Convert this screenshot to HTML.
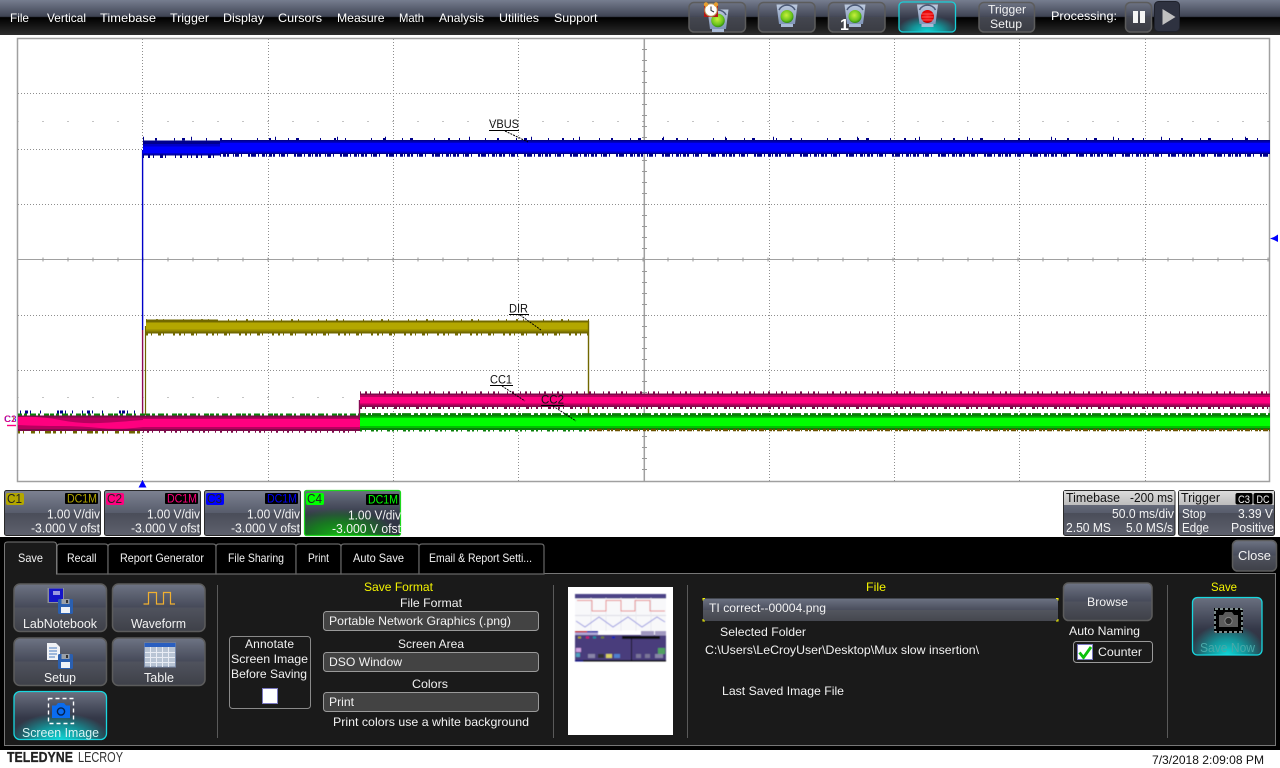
<!DOCTYPE html>
<html><head><meta charset="utf-8"><title>Teledyne LeCroy</title>
<style>
html,body{margin:0;padding:0;background:#fff;width:1280px;height:768px;overflow:hidden}
svg{display:block}
text{font-family:"Liberation Sans",Arial,sans-serif;font-size:12px;fill:#f2f2f2;white-space:pre}
.m{font-size:12px;fill:#fff}
.y{fill:#f4f400}
.k{fill:#000}
.c{font-size:13px;fill:#f4f4f4}
.l{font-size:12px;fill:#111}
</style></head><body>
<svg width="1280" height="768" viewBox="0 0 1280 768" xmlns="http://www.w3.org/2000/svg">
<defs>
<filter id="soft" x="-5%" y="-5%" width="110%" height="110%"><feGaussianBlur stdDeviation=".45"/></filter>
<linearGradient id="bar" x1="0" y1="0" x2="0" y2="1">
<stop offset="0" stop-color="#767d8f"/><stop offset=".47" stop-color="#3e4353"/><stop offset=".5" stop-color="#000"/><stop offset="1" stop-color="#2d2d2d"/></linearGradient>
<linearGradient id="btn" x1="0" y1="0" x2="0" y2="1">
<stop offset="0" stop-color="#6e7484"/><stop offset=".5" stop-color="#454958"/><stop offset=".5" stop-color="#50535e"/><stop offset="1" stop-color="#3e4048"/></linearGradient>
<linearGradient id="act" x1="0" y1="0" x2="0" y2="1">
<stop offset="0" stop-color="#6a7080"/><stop offset=".55" stop-color="#343848"/><stop offset="1" stop-color="#2e3240"/></linearGradient>
<radialGradient id="glow" cx=".5" cy="1" r=".55" fx=".5" fy="1">
<stop offset="0" stop-color="#10d8d8"/><stop offset=".5" stop-color="#0fa5a8" stop-opacity=".85"/><stop offset="1" stop-color="#0fa5a8" stop-opacity="0"/></radialGradient>
<radialGradient id="gglow" cx=".35" cy="1" r=".6" fx=".35" fy="1">
<stop offset="0" stop-color="#16b016"/><stop offset=".5" stop-color="#128a18" stop-opacity=".8"/><stop offset="1" stop-color="#128a18" stop-opacity="0"/></radialGradient>
<linearGradient id="desc" x1="0" y1="0" x2="0" y2="1">
<stop offset="0" stop-color="#7d8292"/><stop offset=".5" stop-color="#575c6b"/><stop offset=".5" stop-color="#4a4d59"/><stop offset="1" stop-color="#5e616d"/></linearGradient>
<linearGradient id="inp" x1="0" y1="0" x2="0" y2="1">
<stop offset="0" stop-color="#6c7282"/><stop offset=".5" stop-color="#4a4e5d"/><stop offset=".5" stop-color="#53565f"/><stop offset="1" stop-color="#45474f"/></linearGradient>
<linearGradient id="hdr" x1="0" y1="0" x2="0" y2="1"><stop offset="0" stop-color="#dcdcdc"/><stop offset="1" stop-color="#bcbcbc"/></linearGradient>
<radialGradient id="gball" cx=".45" cy=".4" r=".6"><stop offset="0" stop-color="#c8f03c"/><stop offset=".7" stop-color="#6cc41c"/><stop offset="1" stop-color="#2f8a10"/></radialGradient>
<radialGradient id="rball" cx=".5" cy=".45" r=".6"><stop offset="0" stop-color="#ff2020"/><stop offset=".75" stop-color="#e00000"/><stop offset="1" stop-color="#8a0000"/></radialGradient>
<linearGradient id="frame" x1="0" y1="0" x2="0" y2="1"><stop offset="0" stop-color="#bcc9de"/><stop offset="1" stop-color="#7f94b8"/></linearGradient>
<g id="light"><path d="M-10.5 -10.5H10.5L8 9H-8Z" fill="url(#frame)"/><path d="M-8 -5A9 9 0 0 1 8 -5" fill="none" stroke="#4c5a78" stroke-width="1.5"/><path d="M-6 9H6V12H-6Z" fill="#a9bad6"/></g>
<g id="floppy"><rect width="15" height="15" rx="1.5" fill="#2a5fb0"/><rect x="3" y="8" width="9" height="6" fill="#eef2f8"/><rect x="3.5" y="0" width="8" height="5" fill="#9aa0a8"/><rect x="8" y="1" width="2" height="3" fill="#333"/></g>
</defs>

<!-- plot -->
<rect width="1280" height="768" fill="#fff"/>
<g fill="none" stroke="#8e8e8e" stroke-width="1" stroke-dasharray="1 2">
<path d="M142.5 39V481M268.5 39V481M393.5 39V481M518.5 39V481M769.5 39V481M894.5 39V481M1019.5 39V481M1145.5 39V481"/>
<path d="M18 93.5H1269M18 149.5H1269M18 204.5H1269M18 315.5H1269M18 370.5H1269M18 425.5H1269"/>
</g>
<g fill="none" stroke="#8a8a8a" stroke-width="1" stroke-dasharray="1 24">
<path d="M17.5 121.5H1269M17.5 397.5H1269"/>
</g>
<g fill="none" stroke="#a0a0a0">
<path stroke-width="1.5" d="M644.3 38V481"/>
<path stroke-width="1" d="M18 259.5H1269"/>
<rect x="17.5" y="38.5" width="1252" height="443" stroke-width="1.5"/>
</g>
<g fill="none" stroke="#999" stroke-width="1">
<path d="M642 49.5h5M642 60.5h5M642 71.5h5M642 82.5h5M642 93.5h5M642 104.5h5M642 115.5h5M642 126.5h5M642 137.5h5M642 149.5h5M642 160.5h5M642 171.5h5M642 182.5h5M642 193.5h5M642 204.5h5M642 215.5h5M642 226.5h5M642 237.5h5M642 248.5h5M642 271.5h5M642 282.5h5M642 293.5h5M642 304.5h5M642 315.5h5M642 326.5h5M642 337.5h5M642 348.5h5M642 359.5h5M642 370.5h5M642 381.5h5M642 392.5h5M642 403.5h5M642 414.5h5M642 425.5h5M642 436.5h5M642 447.5h5M642 458.5h5M642 469.5h5"/>
<path stroke-width="4" stroke-dasharray="1 24" d="M42.5 259.5H1269"/>
</g>

<!-- blue C3 -->
<path d="M142.6 150V330" stroke="#0000c8" stroke-width="1.4" fill="none"/>
<path d="M142.6 330V414" stroke="#8a0a55" stroke-width="1.4" fill="none"/>
<path d="M145.5 326V415" stroke="#6f6500" stroke-width="1.2" fill="none"/>
<rect x="143" y="140.5" width="77" height="15" fill="#00008c"/>
<rect x="143" y="144" width="77" height="10.5" fill="#0000c8"/>
<rect x="143" y="146.5" width="77" height="6.5" fill="#0000ff"/>
<rect x="220" y="140" width="1050" height="14" fill="#00008c"/>
<rect x="220" y="141.5" width="1050" height="11.5" fill="#0000c4"/>
<rect x="220" y="143" width="1050" height="8.5" fill="#0000ff"/>
<g fill="none" stroke="#00008c">
<path stroke-width="4" stroke-dasharray="1 4 2 3 1 6 3 2 1 9 1 4 2 5 1 3" d="M143 156H220"/>
<path stroke-width="3.5" stroke-dasharray="1 2 3 1 2 4 1 1 4 2 1 6 2 1 5 2 1 3 3 1" d="M220 155H1270"/>
<path stroke-width="2.4" stroke-dasharray="1 11 2 17 1 7 3 21 1 13 2 9 1 25" d="M143 139.2H1270"/>
<path stroke-width="3.5" stroke-dasharray="1 47 1 83 1 61" d="M143 138.5H1270"/>
</g>

<!-- olive C1 -->
<rect x="146" y="319.5" width="72" height="14" fill="#716800"/>
<rect x="218" y="320.5" width="371" height="13" fill="#716800"/>
<rect x="146" y="322" width="443" height="9.5" fill="#958a00"/>
<rect x="146" y="323" width="443" height="6.5" fill="#b3a700"/>
<path d="M146 334.3H589" stroke="#716800" stroke-width="2.4" stroke-dasharray="2 3 1 6 3 2 1 9 2 4" fill="none"/>
<path d="M146 319.8H589" stroke="#716800" stroke-width="1.4" stroke-dasharray="1 9 2 5 1 19 1 7" fill="none"/>
<path d="M588.5 321V416" stroke="#716800" stroke-width="1.4" fill="none"/>

<!-- pre-step pink -->
<path d="M18 414.5H360" stroke="#0a820a" stroke-width="2" stroke-dasharray="4 2 3 3 6 2 2 4 5 1" fill="none"/>
<path d="M20 412H140" stroke="#00008c" stroke-width="3" stroke-dasharray="1 4 3 2 1 9 1 16 2 1 3 2 1 6 1 9" fill="none"/>
<path d="M18 432H140" stroke="#6f6500" stroke-width="3" stroke-dasharray="2 3 1 7 4 4 1 5 6 2 3 4" fill="none"/>
<path d="M143 431.5H360" stroke="#7d0a4a" stroke-width="2.4" stroke-dasharray="1 3 2 3 1 6 1 4 2 5" fill="none"/>
<rect x="18" y="415.5" width="342" height="15.5" fill="#7d0a4a"/>
<rect x="18" y="417.5" width="342" height="11.5" fill="#b8005f"/>
<rect x="143" y="419" width="217" height="8" fill="#ff007f"/>
<path d="M18 417Q40 416 60 420T100 423T143 420V427Q120 430 100 428T60 426T18 425Z" fill="#ff007f"/>
<path d="M359.5 400V420" stroke="#8a0a55" stroke-width="1.4" fill="none"/>

<!-- green C4 -->
<rect x="360" y="415" width="910" height="15" fill="#088008"/>
<rect x="360" y="416.5" width="910" height="11.5" fill="#00c000"/>
<rect x="360" y="418" width="910" height="8" fill="#00ff00"/>
<path d="M360 414.3H1270" stroke="#088008" stroke-width="2.4" stroke-dasharray="6 2 3 1 9 3 4 2" fill="none"/>
<path d="M360 430.5H589" stroke="#088008" stroke-width="2" stroke-dasharray="2 3 1 5 3 2" fill="none"/>
<path d="M589 430H1270" stroke="#6b5200" stroke-width="2.4" stroke-dasharray="3 1 2 2 5 1 1 3" fill="none"/>

<!-- pink C2 high -->
<rect x="360" y="393.5" width="910" height="13.5" fill="#7d0a4a"/>
<rect x="360" y="395" width="910" height="10.5" fill="#b8005f"/>
<rect x="360" y="397" width="910" height="6.5" fill="#ff007f"/>
<path d="M360 392.6H1270" stroke="#7d0a4a" stroke-width="2.4" stroke-dasharray="1 4 2 3 1 8 1 4 2 6" fill="none"/>
<path d="M360 407.8H1270" stroke="#7d0a4a" stroke-width="2.4" stroke-dasharray="2 3 1 6 3 2 1 4" fill="none"/>

<!-- labels -->
<text class="l" x="489" y="128" textLength="30" lengthAdjust="spacingAndGlyphs">VBUS</text>
<path d="M489 130.5H519" stroke="#000" fill="none"/><path d="M505 131L528 142" stroke="#000" stroke-dasharray="2 1" fill="none"/>
<text class="l" x="509" y="312.5" textLength="19" lengthAdjust="spacingAndGlyphs">DIR</text>
<path d="M509 314.5H529" stroke="#000" fill="none"/><path d="M520 315L541 330" stroke="#000" stroke-dasharray="2 1" fill="none"/>
<text class="l" x="490" y="383.5" textLength="22" lengthAdjust="spacingAndGlyphs">CC1</text>
<path d="M490 385.5H513" stroke="#000" fill="none"/><path d="M502 386L525 401" stroke="#000" stroke-dasharray="2 1" fill="none"/>
<text class="l" x="541" y="403.5" textLength="23" lengthAdjust="spacingAndGlyphs">CC2</text>
<path d="M541 405.5H564" stroke="#000" fill="none"/><path d="M553 406L576 421" stroke="#000" stroke-dasharray="2 1" fill="none"/>

<!-- markers -->
<text x="4" y="422" style="font-size:9px;fill:#b3a700" textLength="12">C1</text>
<text x="4.5" y="422" style="font-size:9px;fill:#0000ff" textLength="12">C3</text>
<text x="4" y="422" style="font-size:9px;fill:#ff007f" textLength="12">C2</text>
<path d="M7 425.5H16" stroke="#ff007f" stroke-width="1.4" fill="none"/>
<path d="M138.5 487.5L142.5 480L146.5 487.5Z" fill="#0000ff"/>
<path d="M1270 238.5L1274 237L1278 234.5V242L1274 240Z" fill="#0000ff"/>

<!-- top bar -->
<rect width="1280" height="35" fill="url(#bar)"/>
<text class="m" x="10" y="22" textLength="19" lengthAdjust="spacingAndGlyphs">File</text>
<text class="m" x="47" y="22" textLength="39" lengthAdjust="spacingAndGlyphs">Vertical</text>
<text class="m" x="100" y="22" textLength="56" lengthAdjust="spacingAndGlyphs">Timebase</text>
<text class="m" x="170" y="22" textLength="39" lengthAdjust="spacingAndGlyphs">Trigger</text>
<text class="m" x="223" y="22" textLength="41" lengthAdjust="spacingAndGlyphs">Display</text>
<text class="m" x="278" y="22" textLength="44" lengthAdjust="spacingAndGlyphs">Cursors</text>
<text class="m" x="337" y="22" textLength="47.5" lengthAdjust="spacingAndGlyphs">Measure</text>
<text class="m" x="399" y="22" textLength="25" lengthAdjust="spacingAndGlyphs">Math</text>
<text class="m" x="439" y="22" textLength="45" lengthAdjust="spacingAndGlyphs">Analysis</text>
<text class="m" x="499" y="22" textLength="40" lengthAdjust="spacingAndGlyphs">Utilities</text>
<text class="m" x="554" y="22" textLength="43.5" lengthAdjust="spacingAndGlyphs">Support</text>
<!-- toolbar buttons -->
<g stroke="#5c5c5c" stroke-width="1.5" fill="url(#btn)" fill-opacity=".85">
<rect x="689" y="2.5" width="56.5" height="29.5" rx="5"/>
<rect x="758.5" y="2.5" width="56.5" height="29.5" rx="5"/>
<rect x="828.5" y="2.5" width="56.5" height="29.5" rx="5"/>
<rect x="979" y="2.5" width="55.5" height="29.5" rx="5"/>
<rect x="1125.5" y="2.5" width="26" height="29.5" rx="5"/>
</g>
<rect x="1154.5" y="1.5" width="25" height="30" rx="4" fill="#2e3240" stroke="#1f222c"/>
<rect x="899" y="2" width="56.5" height="30" rx="4" fill="url(#act)"/>
<rect x="899" y="2" width="56.5" height="30" rx="4" fill="url(#glow)"/>
<rect x="899" y="2" width="56.5" height="30" rx="4" fill="none" stroke="#18d0d8" stroke-width="1.3"/>
<!-- b1 -->
<use href="#light" x="718" y="20"/><circle cx="718" cy="20.5" r="6.8" fill="url(#gball)"/>
<rect x="704" y="5" width="14" height="12" fill="#b51818"/>
<circle cx="711" cy="10" r="6.2" fill="#fff" stroke="#b89a5a" stroke-width="1"/>
<path d="M711 6.5V10.5L714 12" stroke="#333" fill="none"/>
<circle cx="706" cy="4.5" r="2.2" fill="#e8a030"/><circle cx="716" cy="4.5" r="2.2" fill="#e8a030"/>
<!-- b2 -->
<use href="#light" x="787" y="15"/><circle cx="787" cy="16.5" r="6.5" fill="url(#gball)"/>
<!-- b3 -->
<use href="#light" x="855" y="15"/><circle cx="855" cy="16.5" r="6.5" fill="url(#gball)"/>
<text x="840" y="30" style="font-size:16px;font-weight:bold;fill:#fff">1</text>
<!-- b4 -->
<use href="#light" x="927.5" y="15"/><circle cx="927.5" cy="16.5" r="6.5" fill="url(#rball)"/>
<path d="M921.5 14h12M921.5 17h12M922 20h11" stroke="#ff7070" stroke-width=".7" fill="none"/>
<text x="988" y="13.5" textLength="38" lengthAdjust="spacingAndGlyphs">Trigger</text>
<text x="990" y="28" textLength="32" lengthAdjust="spacingAndGlyphs">Setup</text>
<text class="m" x="1051" y="20" textLength="66" lengthAdjust="spacingAndGlyphs">Processing:</text>
<rect x="1133" y="11" width="5" height="12" fill="#f4f4f4"/><rect x="1140" y="11" width="5" height="12" fill="#f4f4f4"/>
<path d="M1162.5 9L1175.5 17L1162.5 25Z" fill="#c0c0c0"/>

<!-- descriptors -->
<g stroke="#2a2a2a" stroke-width="1" fill="url(#desc)">
<rect x="4.5" y="490.5" width="96" height="45" rx="2"/>
<rect x="104.5" y="490.5" width="96" height="45" rx="2"/>
<rect x="204.5" y="490.5" width="96" height="45" rx="2"/>
<rect x="1063.5" y="490.5" width="111.5" height="45" rx="2"/>
<rect x="1178.5" y="490.5" width="96" height="45" rx="2"/>
</g>
<rect x="304.5" y="490.5" width="96" height="45" rx="2" fill="url(#act)"/>
<rect x="304.5" y="490.5" width="96" height="45" rx="2" fill="url(#gglow)"/>
<rect x="304.5" y="490.5" width="96" height="45" rx="2" fill="none" stroke="#1ed81e" stroke-width="1.2"/>
<rect x="6" y="493" width="18" height="12" rx="2" fill="#b3a700"/>
<rect x="106" y="493" width="18" height="12" rx="2" fill="#ff007f"/>
<rect x="206" y="493" width="18" height="12" rx="2" fill="#0000ff"/>
<rect x="306" y="493" width="18" height="12" rx="2" fill="#00ff00"/>
<rect x="65" y="493" width="33" height="11" rx="1" fill="#000"/><rect x="165" y="493" width="33" height="11" rx="1" fill="#000"/><rect x="265" y="493" width="33" height="11" rx="1" fill="#000"/><rect x="366" y="494" width="33" height="11" rx="1" fill="#000"/>
<text x="7" y="503" textLength="15" lengthAdjust="spacingAndGlyphs" style="fill:#222;font-size:13px">C1</text>
<text x="107" y="503" textLength="15" lengthAdjust="spacingAndGlyphs" style="fill:#222;font-size:13px">C2</text>
<text x="207" y="503" textLength="15" lengthAdjust="spacingAndGlyphs" style="fill:#222;font-size:13px">C3</text>
<text x="307" y="503" textLength="15" lengthAdjust="spacingAndGlyphs" style="fill:#222;font-size:13px">C4</text>
<text x="67" y="502.5" textLength="30" lengthAdjust="spacingAndGlyphs" style="fill:#b3a700">DC1M</text>
<text x="167" y="502.5" textLength="30" lengthAdjust="spacingAndGlyphs" style="fill:#ff007f">DC1M</text>
<text x="267" y="502.5" textLength="30" lengthAdjust="spacingAndGlyphs" style="fill:#0000ff">DC1M</text>
<text x="368" y="503.5" textLength="30" lengthAdjust="spacingAndGlyphs" style="fill:#00ff00">DC1M</text>
<text class="c" x="47" y="518.5" textLength="53" lengthAdjust="spacingAndGlyphs">1.00 V/div</text>
<text class="c" x="147" y="518.5" textLength="53" lengthAdjust="spacingAndGlyphs">1.00 V/div</text>
<text class="c" x="247" y="518.5" textLength="53" lengthAdjust="spacingAndGlyphs">1.00 V/div</text>
<text class="c" x="348" y="519.5" textLength="53" lengthAdjust="spacingAndGlyphs">1.00 V/div</text>
<text class="c" x="31" y="532.5" textLength="69" lengthAdjust="spacingAndGlyphs">-3.000 V ofst</text>
<text class="c" x="131" y="532.5" textLength="69" lengthAdjust="spacingAndGlyphs">-3.000 V ofst</text>
<text class="c" x="231" y="532.5" textLength="69" lengthAdjust="spacingAndGlyphs">-3.000 V ofst</text>
<text class="c" x="332" y="533" textLength="69" lengthAdjust="spacingAndGlyphs">-3.000 V ofst</text>
<!-- timebase -->
<rect x="1064" y="491" width="110.5" height="14" fill="url(#hdr)"/><rect x="1179" y="491" width="95" height="14" fill="url(#hdr)"/>
<text class="c" x="1066" y="502" textLength="54" lengthAdjust="spacingAndGlyphs" style="fill:#111">Timebase</text>
<text class="c" x="1130" y="502" textLength="43" lengthAdjust="spacingAndGlyphs" style="fill:#111">-200 ms</text>
<text class="c" x="1112" y="518" textLength="62" lengthAdjust="spacingAndGlyphs">50.0 ms/div</text>
<text class="c" x="1066" y="532" textLength="45" lengthAdjust="spacingAndGlyphs">2.50 MS</text>
<text class="c" x="1126" y="532" textLength="47" lengthAdjust="spacingAndGlyphs">5.0 MS/s</text>
<text class="c" x="1181" y="502" textLength="39" lengthAdjust="spacingAndGlyphs" style="fill:#111">Trigger</text>
<rect x="1235.5" y="493" width="17" height="11.5" rx="2" fill="#000"/><rect x="1253.5" y="493" width="19" height="11.5" rx="2" fill="#000"/>
<text x="1238" y="503" textLength="12" lengthAdjust="spacingAndGlyphs" style="font-size:11px">C3</text>
<text x="1256.5" y="503" textLength="13" lengthAdjust="spacingAndGlyphs" style="font-size:11px">DC</text>
<text class="c" x="1182" y="518" textLength="24" lengthAdjust="spacingAndGlyphs">Stop</text>
<text class="c" x="1238" y="518" textLength="35" lengthAdjust="spacingAndGlyphs">3.39 V</text>
<text class="c" x="1182" y="532" textLength="27" lengthAdjust="spacingAndGlyphs">Edge</text>
<text class="c" x="1231" y="532" textLength="43" lengthAdjust="spacingAndGlyphs">Positive</text>

<!-- dialog -->
<rect x="0" y="537" width="1280" height="213" fill="#000"/>
<rect x="4.5" y="573.5" width="1271" height="172" fill="#1a1a1a" stroke="#777"/>
<g fill="#000" stroke="#666" stroke-width="1.2">
<path d="M57 574V547Q57 544 60 544H105Q108 544 108 547V574Z"/>
<path d="M108 574V547Q108 544 111 544H213Q216 544 216 547V574Z"/>
<path d="M216 574V547Q216 544 219 544H293Q296 544 296 547V574Z"/>
<path d="M296 574V547Q296 544 299 544H338Q341 544 341 547V574Z"/>
<path d="M341 574V547Q341 544 344 544H416Q419 544 419 547V574Z"/>
<path d="M419 574V547Q419 544 422 544H541Q544 544 544 547V574Z"/>
</g>
<path d="M4.5 574V545Q4.5 542 7.5 542H53.5Q56.5 542 56.5 545V574Z" fill="#1a1a1a" stroke="#777"/>
<rect x="5" y="570" width="51" height="5" fill="#1a1a1a"/>
<text x="18" y="562" textLength="25" lengthAdjust="spacingAndGlyphs">Save</text>
<text x="67" y="562" textLength="29.5" lengthAdjust="spacingAndGlyphs">Recall</text>
<text x="120" y="562" textLength="84" lengthAdjust="spacingAndGlyphs">Report Generator</text>
<text x="228" y="562" textLength="56" lengthAdjust="spacingAndGlyphs">File Sharing</text>
<text x="308" y="562" textLength="21" lengthAdjust="spacingAndGlyphs">Print</text>
<text x="353" y="562" textLength="51" lengthAdjust="spacingAndGlyphs">Auto Save</text>
<text x="429" y="562" textLength="103" lengthAdjust="spacingAndGlyphs">Email &amp; Report Setti...</text>
<rect x="1232.5" y="540.5" width="44" height="30.5" rx="5" fill="url(#btn)" stroke="#5c5c5c" stroke-width="1.5"/>
<text x="1238" y="560" textLength="33" lengthAdjust="spacingAndGlyphs" style="font-size:13px">Close</text>

<!-- left buttons -->
<g fill="url(#btn)" stroke="#5c5c5c" stroke-width="1.5">
<rect x="14" y="584" width="92.5" height="47.5" rx="6"/>
<rect x="112.5" y="584" width="92.5" height="47.5" rx="6"/>
<rect x="14" y="638" width="92.5" height="47.5" rx="6"/>
<rect x="112.5" y="638" width="92.5" height="47.5" rx="6"/>
</g>
<rect x="14" y="691.5" width="92.5" height="48" rx="6" fill="url(#act)"/>
<rect x="14" y="691.5" width="92.5" height="48" rx="6" fill="url(#glow)"/>
<rect x="14" y="691.5" width="92.5" height="48" rx="6" fill="none" stroke="#18d8e0" stroke-width="1.3"/>
<text x="23" y="628" textLength="74" lengthAdjust="spacingAndGlyphs" style="font-size:13px">LabNotebook</text>
<text x="131" y="628" textLength="55" lengthAdjust="spacingAndGlyphs" style="font-size:13px">Waveform</text>
<text x="44" y="682" textLength="32" lengthAdjust="spacingAndGlyphs" style="font-size:13px">Setup</text>
<text x="144" y="682" textLength="30" lengthAdjust="spacingAndGlyphs" style="font-size:13px">Table</text>
<text x="22" y="737" textLength="77" lengthAdjust="spacingAndGlyphs" style="font-size:13px;fill:#d8f4f4">Screen Image</text>
<!-- icons -->
<rect x="47.5" y="588" width="16.5" height="15" fill="#8a8e98"/><rect x="49" y="588.5" width="14" height="13.5" fill="#1414c8"/><rect x="53" y="591" width="7" height="4" fill="#9a9ae0"/>
<use href="#floppy" x="58" y="599"/>
<path d="M143.5 604H148.5V592.5H156.5V604H163.5V592.5H170.5V604H175" fill="none" stroke="#f0b030" stroke-width="1.2"/>
<path d="M47 643H56L60 647V660H47Z" fill="#f0f2f6"/><path d="M49 648h8M49 651h8M49 654h8M49 657h6" stroke="#4a7cc0" fill="none"/>
<use href="#floppy" x="58" y="654"/>
<rect x="144.5" y="643" width="31" height="24" fill="#b8c4d4" stroke="#7a8aa8"/><rect x="144.5" y="643" width="31" height="4" fill="#2a5fc0"/>
<path d="M150.5 647V667M156.5 647V667M162.5 647V667M168.5 647V667M145 652.5H175M145 657.5H175M145 662.5H175" stroke="#e8ecf4" fill="none"/>
<rect x="48.5" y="698.5" width="25" height="25" fill="none" stroke="#fff" stroke-width="1.4" stroke-dasharray="4 3"/>
<path d="M52 705.5H56L58 703H64L66 705.5H70V718H52Z" fill="#0a6cf0"/><circle cx="61" cy="711.5" r="3.6" fill="#0a6cf0" stroke="#05224f" stroke-width="1.4"/>
<!-- dividers -->
<path d="M217.5 585V738M553.5 585V738M687.5 585V738M1167.5 585V738" stroke="#5a5a5a" fill="none"/>
<!-- annotate -->
<rect x="229.5" y="636.5" width="81" height="72" rx="3" fill="none" stroke="#8a8a8a"/>
<text x="245" y="648" textLength="49">Annotate</text>
<text x="231" y="663" textLength="77" lengthAdjust="spacingAndGlyphs">Screen Image</text>
<text x="231" y="678" textLength="76" lengthAdjust="spacingAndGlyphs">Before Saving</text>
<rect x="262.5" y="688.5" width="15" height="15" fill="#fff" stroke="#7a78c0"/>
<!-- save format -->
<text class="y" x="364" y="591" textLength="69" lengthAdjust="spacingAndGlyphs">Save Format</text>
<text x="400" y="607" textLength="62" lengthAdjust="spacingAndGlyphs">File Format</text>
<g fill="#434343" stroke="#9a9a9a">
<rect x="323.5" y="611.5" width="215" height="19" rx="3"/>
<rect x="323.5" y="652.5" width="215" height="19" rx="3"/>
<rect x="323.5" y="692.5" width="215" height="19" rx="3"/>
</g>
<text x="329" y="625" textLength="182" lengthAdjust="spacingAndGlyphs">Portable Network Graphics (.png)</text>
<text x="398" y="648" textLength="66" lengthAdjust="spacingAndGlyphs">Screen Area</text>
<text x="329" y="666" textLength="73" lengthAdjust="spacingAndGlyphs">DSO Window</text>
<text x="412" y="688" textLength="36" lengthAdjust="spacingAndGlyphs">Colors</text>
<text x="329" y="706" textLength="25" lengthAdjust="spacingAndGlyphs">Print</text>
<text x="333" y="726" textLength="196" lengthAdjust="spacingAndGlyphs">Print colors use a white background</text>
<!-- preview -->
<rect x="568" y="587" width="105" height="148" fill="#fff"/>
<g filter="url(#soft)">
<rect x="575" y="594" width="91" height="4.5" fill="#4c4286"/>
<rect x="575" y="598.5" width="91" height="32" fill="#f8f8fa"/>
<path d="M575 615.5H666" stroke="#dcdce4" fill="none"/>
<path d="M606 598V631M636 598V631M591 598V631M621 598V631M651 598V631" stroke="#eaeaf0" fill="none"/>
<path d="M577 600.5H592V611H606V600.5H621V611H635V600.5H650V611H665" fill="none" stroke="#e88a8a"/>
<path d="M576 621L585 627L599 617L613 627L628 617L642 627L657 617L665 622" fill="none" stroke="#9a9ae0"/>
<rect x="575" y="635" width="91" height="26.5" fill="#483d7c"/>
<rect x="575" y="631" width="12" height="1.5" fill="#c01020"/><rect x="587" y="631" width="11" height="1.5" fill="#1010a0"/>
<rect x="575" y="632.5" width="23" height="2.5" fill="#b0a8d8"/><rect x="641" y="631" width="13" height="4.5" fill="#a098c0"/><rect x="655" y="631" width="11" height="4.5" fill="#a098c0"/>
<rect x="622" y="636" width="38" height="3" fill="#111"/>
<rect x="578" y="636.5" width="3" height="2" fill="#b0a000"/><rect x="586" y="636.5" width="3" height="2" fill="#d01070"/><rect x="593" y="636.5" width="3" height="2" fill="#1090a0"/><rect x="601" y="636.5" width="3" height="2" fill="#708020"/><rect x="612" y="636.5" width="3" height="2" fill="#1020c0"/>
<rect x="575" y="660" width="91" height="1.5" fill="#111"/><rect x="575" y="660" width="8" height="1.5" fill="#101080"/>
<rect x="576" y="648" width="5" height="4" fill="#d0a0e0"/><rect x="576" y="653" width="4" height="4" fill="#50a0c0"/><rect x="588" y="654" width="7" height="4" fill="#8884a8"/><rect x="598" y="654" width="6" height="4" fill="#333"/><rect x="606" y="654" width="6" height="4" fill="#d8d060"/><rect x="614" y="654" width="6" height="4" fill="#5080d0"/>
<rect x="631" y="636" width="1" height="24" fill="#111"/><rect x="658" y="648" width="7" height="6" fill="#50a060"/><rect x="636" y="654" width="5" height="4" fill="#7a7498"/><rect x="645" y="654" width="5" height="4" fill="#7a7498"/><rect x="655" y="654" width="8" height="4" fill="#8884a8"/>
</g>
<!-- file -->
<text class="y" x="866" y="591" textLength="20" lengthAdjust="spacingAndGlyphs">File</text>
<rect x="703" y="598.5" width="355" height="22.5" fill="url(#inp)"/>
<path d="M703 600.5V598.5H705M1056 598.5H1058V600.5M703 619V621H705M1056 621H1058V619" fill="none" stroke="#f4f400"/>
<text x="709" y="612" textLength="117" lengthAdjust="spacingAndGlyphs">TI correct--00004.png</text>
<rect x="1063.5" y="583" width="88.5" height="37.5" rx="5" fill="url(#btn)" stroke="#5c5c5c" stroke-width="1.5"/>
<text x="1087" y="606" textLength="41" lengthAdjust="spacingAndGlyphs">Browse</text>
<text x="1069" y="635" textLength="71" lengthAdjust="spacingAndGlyphs">Auto Naming</text>
<rect x="1073.5" y="641.5" width="79" height="21" rx="3" fill="none" stroke="#9a9a9a"/>
<rect x="1077.5" y="644.5" width="15" height="15" fill="#fff" stroke="#7a78c0"/>
<path d="M1079.5 652.5L1083.5 657.5L1091 647" fill="none" stroke="#0cc20c" stroke-width="2.8"/>
<text x="1098" y="656" textLength="44" lengthAdjust="spacingAndGlyphs">Counter</text>
<text x="720" y="636" textLength="86" lengthAdjust="spacingAndGlyphs">Selected Folder</text>
<text x="705" y="654" textLength="274" lengthAdjust="spacingAndGlyphs">C:\Users\LeCroyUser\Desktop\Mux slow insertion\</text>
<text x="722" y="695" textLength="122" lengthAdjust="spacingAndGlyphs">Last Saved Image File</text>
<!-- save -->
<text class="y" x="1211" y="591" textLength="26" lengthAdjust="spacingAndGlyphs">Save</text>
<rect x="1192.5" y="597.5" width="69.5" height="57.5" rx="5" fill="url(#act)"/>
<rect x="1192.5" y="597.5" width="69.5" height="57.5" rx="5" fill="url(#glow)"/>
<rect x="1192.5" y="597.5" width="69.5" height="57.5" rx="5" fill="none" stroke="#18d8e0" stroke-width="1.3"/>
<rect x="1214" y="608" width="29" height="25" fill="#000"/>
<rect x="1215" y="609" width="27" height="23" fill="none" stroke="#c8e0e0" stroke-width="1.2" stroke-dasharray="3 2"/>
<path d="M1219 615H1223L1225 612H1232L1234 615H1238V627H1219Z" fill="#5c5c5c"/><circle cx="1228.5" cy="621" r="3.6" fill="#2a2a2a" stroke="#888"/>
<text x="1200" y="652" textLength="55" lengthAdjust="spacingAndGlyphs" style="font-size:13px;fill:#4aa8a8">Save Now</text>
<!-- footer -->
<text x="7" y="762" textLength="66" lengthAdjust="spacingAndGlyphs" style="font-size:14.7px;font-weight:bold;fill:#222;stroke:#222;stroke-width:.3">TELEDYNE</text>
<text x="78" y="762" textLength="45" lengthAdjust="spacingAndGlyphs" style="font-size:14.7px;fill:#333">LECROY</text>
<text x="1152" y="764" textLength="112" lengthAdjust="spacingAndGlyphs" style="fill:#111">7/3/2018 2:09:08 PM</text>
</svg>
</body></html>
